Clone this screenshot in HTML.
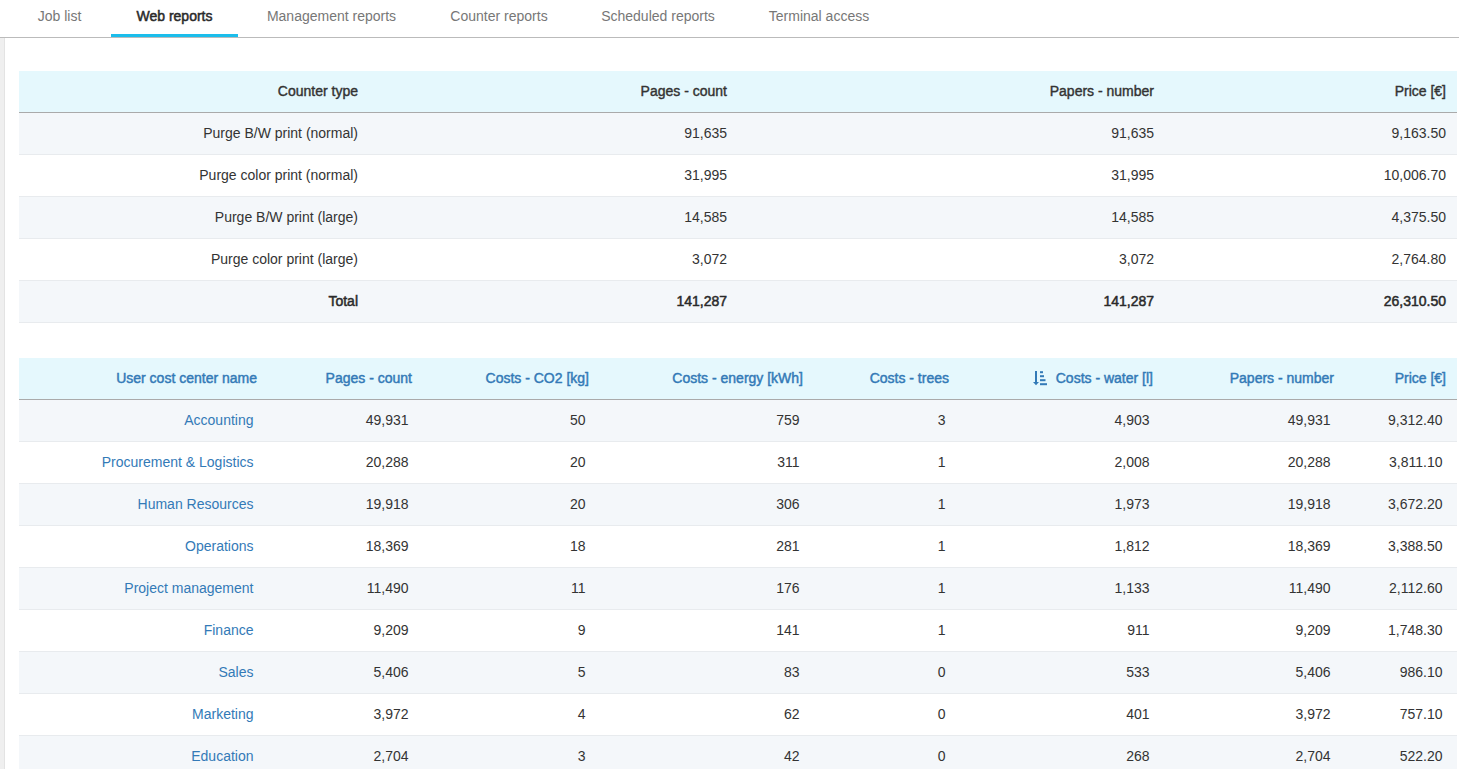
<!DOCTYPE html>
<html>
<head>
<meta charset="utf-8">
<style>
html,body{margin:0;padding:0;background:#fff;}
body{width:1459px;height:769px;overflow:hidden;position:relative;font-family:"Liberation Sans",sans-serif;font-size:14px;color:#333;}
.tabs{position:absolute;left:0;top:0;width:1459px;height:37px;border-bottom:1px solid #bbb;background:#fff;}
.tab{position:absolute;top:0;height:37px;line-height:33px;color:#777;white-space:nowrap;text-align:center;}
.tab.active{color:#2a2a2a;-webkit-text-stroke:0.5px #2a2a2a;}
.uline{position:absolute;left:111px;top:34px;width:127px;height:3px;background:#1bbdeb;}
.side{position:absolute;left:0;top:38px;width:4px;height:731px;background:#efefef;border-right:1px solid #e3e3e3;}
table{position:absolute;left:19px;border-collapse:collapse;table-layout:fixed;width:1438px;}
th{height:40px;padding:0 11px 1px 0;text-align:right;background:#e5f8fd;border-bottom:1px solid #aaa;font-weight:normal;-webkit-text-stroke:0.4px #333;white-space:nowrap;}
td{height:40px;padding:0 11px 1px 0;text-align:right;border-bottom:1px solid #e8ebee;white-space:nowrap;}
tr.o td{background:#f4f7fa;}
#t1{top:71px;}
#t2{top:358px;}
#t2 th{color:#337ab7;-webkit-text-stroke:0.45px #337ab7;}
#t2 td{padding-right:14.5px;}
#t2 td a{color:#337ab7;text-decoration:none;}
tr.tot td{color:#2a2a2a;-webkit-text-stroke:0.5px #2a2a2a;}
.sort{display:inline-block;vertical-align:middle;}
</style>
</head>
<body>
<div class="tabs">
  <div class="tab" style="left:12px;width:95px;">Job list</div>
  <div class="tab active" style="left:111px;width:127px;">Web reports</div>
  <div class="tab" style="left:241px;width:181px;">Management reports</div>
  <div class="tab" style="left:424px;width:150px;">Counter reports</div>
  <div class="tab" style="left:576px;width:164px;">Scheduled reports</div>
  <div class="tab" style="left:743px;width:152px;">Terminal access</div>
  <div class="uline"></div>
</div>
<div class="side"></div>
<svg style="position:absolute;left:1033px;top:371px;z-index:2" width="15" height="15" viewBox="0 0 15 15"><g fill="#337ab7"><rect x="2" y="0" width="2" height="11.5"/><polygon points="0,11 6,11 3,14.2"/><rect x="7" y="0.2" width="3" height="2"/><rect x="7" y="4.2" width="4" height="2"/><rect x="7" y="8.2" width="5.5" height="2"/><rect x="7" y="12.2" width="7" height="2"/></g></svg>

<table id="t1">
<colgroup><col style="width:350px"><col style="width:369px"><col style="width:427px"><col style="width:292px"></colgroup>
<tr><th>Counter type</th><th>Pages - count</th><th>Papers - number</th><th>Price [€]</th></tr>
<tr class="o"><td>Purge B/W print (normal)</td><td>91,635</td><td>91,635</td><td>9,163.50</td></tr>
<tr><td>Purge color print (normal)</td><td>31,995</td><td>31,995</td><td>10,006.70</td></tr>
<tr class="o"><td>Purge B/W print (large)</td><td>14,585</td><td>14,585</td><td>4,375.50</td></tr>
<tr><td>Purge color print (large)</td><td>3,072</td><td>3,072</td><td>2,764.80</td></tr>
<tr class="o tot"><td>Total</td><td>141,287</td><td>141,287</td><td>26,310.50</td></tr>
</table>

<table id="t2">
<colgroup><col style="width:249px"><col style="width:155px"><col style="width:177px"><col style="width:214px"><col style="width:146px"><col style="width:204px"><col style="width:181px"><col style="width:112px"></colgroup>
<tr><th>User cost center name</th><th>Pages - count</th><th>Costs - CO2 [kg]</th><th>Costs - energy [kWh]</th><th>Costs - trees</th><th>Costs - water [l]</th><th>Papers - number</th><th>Price [€]</th></tr>
<tr class="o"><td><a>Accounting</a></td><td>49,931</td><td>50</td><td>759</td><td>3</td><td>4,903</td><td>49,931</td><td>9,312.40</td></tr>
<tr><td><a>Procurement &amp; Logistics</a></td><td>20,288</td><td>20</td><td>311</td><td>1</td><td>2,008</td><td>20,288</td><td>3,811.10</td></tr>
<tr class="o"><td><a>Human Resources</a></td><td>19,918</td><td>20</td><td>306</td><td>1</td><td>1,973</td><td>19,918</td><td>3,672.20</td></tr>
<tr><td><a>Operations</a></td><td>18,369</td><td>18</td><td>281</td><td>1</td><td>1,812</td><td>18,369</td><td>3,388.50</td></tr>
<tr class="o"><td><a>Project management</a></td><td>11,490</td><td>11</td><td>176</td><td>1</td><td>1,133</td><td>11,490</td><td>2,112.60</td></tr>
<tr><td><a>Finance</a></td><td>9,209</td><td>9</td><td>141</td><td>1</td><td>911</td><td>9,209</td><td>1,748.30</td></tr>
<tr class="o"><td><a>Sales</a></td><td>5,406</td><td>5</td><td>83</td><td>0</td><td>533</td><td>5,406</td><td>986.10</td></tr>
<tr><td><a>Marketing</a></td><td>3,972</td><td>4</td><td>62</td><td>0</td><td>401</td><td>3,972</td><td>757.10</td></tr>
<tr class="o"><td><a>Education</a></td><td>2,704</td><td>3</td><td>42</td><td>0</td><td>268</td><td>2,704</td><td>522.20</td></tr>
</table>
</body>
</html>
